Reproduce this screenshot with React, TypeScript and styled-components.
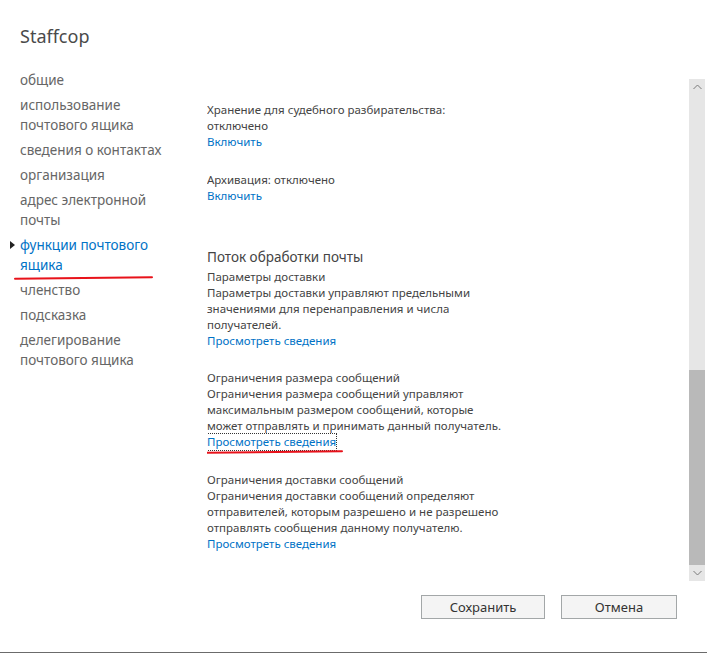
import React from "react";
import styled, { createGlobalStyle } from "styled-components";

const Global = createGlobalStyle`
  html, body { margin: 0; padding: 0; background: #fff; }
  body { font-family: "Noto Sans", "Open Sans", sans-serif; color: #444; }
`;

const Page = styled.div`
  width: 707px;
  height: 653px;
  box-sizing: border-box;
  border-bottom: 1px solid #6b6b6b;
  display: flex;
  flex-direction: column;
  position: relative;
  overflow: hidden;
`;

const Title = styled.h1`
  margin: 0;
  height: 70px;
  box-sizing: border-box;
  padding: 24px 0 0 20px;
  font-size: 18px;
  font-weight: 400;
  line-height: 24px;
  color: #4a4a4a;
`;

const Body = styled.div`
  display: flex;
  height: 511px;
`;

const Nav = styled.nav`
  width: 187px;
  padding-left: 20px;
  display: flex;
  flex-direction: column;
  gap: 5px;
`;

const NavItem = styled.div<{ $active?: boolean }>`
  position: relative;
  font-size: 13.5px;
  line-height: 20px;
  color: ${(p) => (p.$active ? "#0072c6" : "#666")};
  &::before {
    content: ${(p) => (p.$active ? '""' : "none")};
    position: absolute;
    left: -10px;
    top: 6px;
    border-left: 5px solid #222;
    border-top: 4px solid transparent;
    border-bottom: 4px solid transparent;
  }
`;

const Mark = styled.span<{ $w: number }>`
  position: absolute;
  height: 2px;
  width: ${(p) => p.$w}px;
  background: #e8121a;
  border-radius: 1px;
  transform: rotate(-0.6deg);
`;

const NavMark = styled(Mark)`
  left: -6px;
  bottom: -4px;
`;

const Panel = styled.div`
  flex: 1;
  margin-top: 9px;
  display: flex;
  height: 502px;
`;

const Content = styled.div`
  flex: 1;
  padding: 23px 0 0 0;
  overflow: hidden;
`;

const Section = styled.div<{ $gap?: number }>`
  margin-bottom: ${(p) => p.$gap ?? 22}px;
  font-size: 11.5px;
  line-height: 16px;
  color: #444;
  white-space: nowrap;
`;

const Heading = styled.div`
  font-size: 13.5px;
  line-height: 20px;
  color: #444;
  margin-bottom: 2px;
`;

const Text = styled.div``;

const Link = styled.a<{ $focused?: boolean }>`
  position: relative;
  display: inline-block;
  vertical-align: top;
  line-height: 16px;
  color: #0072c6;
  text-decoration: none;
  outline: ${(p) => (p.$focused ? "1px dotted #333" : "none")};
  outline-offset: 0px;
`;

const LinkMark = styled(Mark)`
  left: -4px;
  bottom: -3px;
`;

const ScrollBar = styled.div`
  width: 16px;
  margin-right: 2px;
  background: #e6e6e6;
  display: flex;
  flex-direction: column;
`;

const ArrowCell = styled.div`
  height: 16px;
  display: flex;
  align-items: center;
  justify-content: center;
`;

const Track = styled.div`
  flex: 1;
  display: flex;
  flex-direction: column;
  justify-content: flex-end;
`;

const Thumb = styled.div`
  height: 195px;
  background: #b9b9b9;
`;

const Footer = styled.div`
  display: flex;
  justify-content: flex-end;
  gap: 16px;
  padding: 14px 30px 0 0;
`;

const Button = styled.button<{ $w: number }>`
  width: ${(p) => p.$w}px;
  height: 24px;
  box-sizing: border-box;
  background: #f4f4f4;
  border: 1px solid #a3a7a8;
  font-family: "Noto Sans", "Open Sans", sans-serif;
  font-size: 13px;
  color: #333;
  padding: 0;
`;

const Chevron = ({ up }: { up?: boolean }) => (
  <svg width="9" height="6" viewBox="0 0 9 6">
    <path
      d={up ? "M0.5 5 L4.5 1 L8.5 5" : "M0.5 1 L4.5 5 L8.5 1"}
      fill="none"
      stroke="#7a7a7a"
      strokeWidth="1"
    />
  </svg>
);

export default function App() {
  return (
    <>
      <Global />
      <Page>
        <Title>Staffcop</Title>
        <Body>
          <Nav>
            <NavItem>общие</NavItem>
            <NavItem>
              использование
              <br />
              почтового ящика
            </NavItem>
            <NavItem>сведения о контактах</NavItem>
            <NavItem>организация</NavItem>
            <NavItem>
              адрес электронной
              <br />
              почты
            </NavItem>
            <NavItem $active>
              функции почтового
              <br />
              ящика
              <NavMark $w={139} />
            </NavItem>
            <NavItem>членство</NavItem>
            <NavItem>подсказка</NavItem>
            <NavItem>
              делегирование
              <br />
              почтового ящика
            </NavItem>
          </Nav>
          <Panel>
            <Content>
              <Section>
                <Text>Хранение для судебного разбирательства:</Text>
                <Text>отключено</Text>
                <Link>Включить</Link>
              </Section>
              <Section $gap={43}>
                <Text>Архивация: отключено</Text>
                <Link>Включить</Link>
              </Section>
              <Section $gap={21}>
                <Heading>Поток обработки почты</Heading>
                <Text>Параметры доставки</Text>
                <Text>
                  Параметры доставки управляют предельными
                  <br />
                  значениями для перенаправления и числа
                  <br />
                  получателей.
                </Text>
                <Link>Просмотреть сведения</Link>
              </Section>
              <Section>
                <Text>Ограничения размера сообщений</Text>
                <Text>
                  Ограничения размера сообщений управляют
                  <br />
                  максимальным размером сообщений, которые
                  <br />
                  может отправлять и принимать данный получатель.
                </Text>
                <Link $focused>
                  Просмотреть сведения
                  <LinkMark $w={140} />
                </Link>
              </Section>
              <Section>
                <Text>Ограничения доставки сообщений</Text>
                <Text>
                  Ограничения доставки сообщений определяют
                  <br />
                  отправителей, которым разрешено и не разрешено
                  <br />
                  отправлять сообщения данному получателю.
                </Text>
                <Link>Просмотреть сведения</Link>
              </Section>
            </Content>
            <ScrollBar>
              <ArrowCell>
                <Chevron up />
              </ArrowCell>
              <Track>
                <Thumb />
              </Track>
              <ArrowCell>
                <Chevron />
              </ArrowCell>
            </ScrollBar>
          </Panel>
        </Body>
        <Footer>
          <Button $w={124}>Сохранить</Button>
          <Button $w={116}>Отмена</Button>
        </Footer>
      </Page>
    </>
  );
}
